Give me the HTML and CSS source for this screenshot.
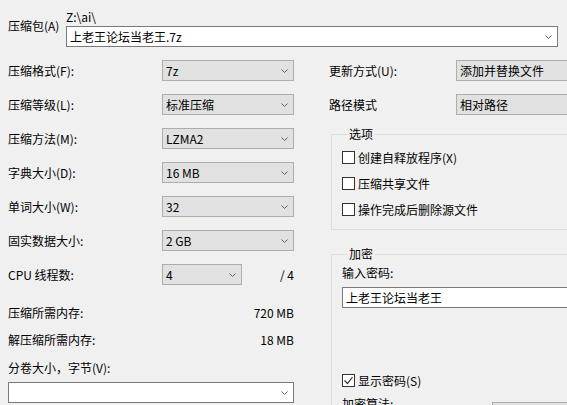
FILE: index.html
```html
<!DOCTYPE html>
<html lang="zh-CN">
<head>
	<meta charset="UTF-8">
	<title>添加到压缩包</title>
	<link rel="stylesheet" href="styles.css">
</head>
<body>

<div id="dialog">

	<div class="archive">
		<span class="archive-label">压缩包(A)</span>
		<div class="archive-field">
			<div class="path">Z:\ai\</div>
			<div class="combo edit">上老王论坛当老王.7z<svg class="arrow" width="7" height="4" viewBox="0 0 7 4"><polyline points="0.5,0.5 3.5,3.5 6.5,0.5"/></svg></div>
		</div>
	</div>

	<div class="columns">

		<div class="col-left">
			<div class="row"><span class="label">压缩格式(F):</span><div class="combo">7z<svg class="arrow" width="7" height="4" viewBox="0 0 7 4"><polyline points="0.5,0.5 3.5,3.5 6.5,0.5"/></svg></div></div>
			<div class="row"><span class="label">压缩等级(L):</span><div class="combo">标准压缩<svg class="arrow" width="7" height="4" viewBox="0 0 7 4"><polyline points="0.5,0.5 3.5,3.5 6.5,0.5"/></svg></div></div>
			<div class="row"><span class="label">压缩方法(M):</span><div class="combo">LZMA2<svg class="arrow" width="7" height="4" viewBox="0 0 7 4"><polyline points="0.5,0.5 3.5,3.5 6.5,0.5"/></svg></div></div>
			<div class="row"><span class="label">字典大小(D):</span><div class="combo">16 MB<svg class="arrow" width="7" height="4" viewBox="0 0 7 4"><polyline points="0.5,0.5 3.5,3.5 6.5,0.5"/></svg></div></div>
			<div class="row"><span class="label">单词大小(W):</span><div class="combo">32<svg class="arrow" width="7" height="4" viewBox="0 0 7 4"><polyline points="0.5,0.5 3.5,3.5 6.5,0.5"/></svg></div></div>
			<div class="row"><span class="label">固实数据大小:</span><div class="combo">2 GB<svg class="arrow" width="7" height="4" viewBox="0 0 7 4"><polyline points="0.5,0.5 3.5,3.5 6.5,0.5"/></svg></div></div>
			<div class="row"><span class="label">CPU 线程数:</span><div class="combo short">4<svg class="arrow" width="7" height="4" viewBox="0 0 7 4"><polyline points="0.5,0.5 3.5,3.5 6.5,0.5"/></svg></div><span class="of">/ 4</span></div>

			<div class="mem first"><span>压缩所需内存:</span><span>720 MB</span></div>
			<div class="mem"><span>解压缩所需内存:</span><span>18 MB</span></div>

			<div class="volume-label">分卷大小，字节(V):</div>
			<div class="combo edit volume"><span></span><svg class="arrow" width="7" height="4" viewBox="0 0 7 4"><polyline points="0.5,0.5 3.5,3.5 6.5,0.5"/></svg></div>
		</div>

		<div class="col-right">
			<div class="row"><span class="label">更新方式(U):</span><div class="combo wide">添加并替换文件</div></div>
			<div class="row"><span class="label">路径模式</span><div class="combo wide">相对路径</div></div>

			<fieldset class="group options">
				<legend>选项</legend>
				<label class="check"><span class="box"></span>创建自释放程序(X)</label>
				<label class="check"><span class="box"></span>压缩共享文件</label>
				<label class="check"><span class="box"></span>操作完成后删除源文件</label>
			</fieldset>

			<fieldset class="group crypt">
				<legend>加密</legend>
				<div class="pw-label">输入密码:</div>
				<div class="edit pw">上老王论坛当老王</div>
				<label class="check show-pw"><span class="box checked"><svg width="11" height="11" viewBox="0 0 11 11"><polyline points="1.5,5.5 4.5,8.5 9.5,2"/></svg></span>显示密码(S)</label>
				<div class="algo"><span class="label">加密算法:</span><div class="combo wide">AES-256</div></div>
			</fieldset>
		</div>

	</div>

</div>

</body>
</html>
```

FILE: styles.css
```css
* {
	box-sizing: border-box;
}
html, body {
	margin: 0;
	background-color: #f0f0f0;
	overflow: hidden;
}
body {
	color: #000;
	font-family: "Noto Sans CJK SC", "Noto Sans", sans-serif;
	font-size: 12px;
	line-height: 14px;
}
#dialog {
	width: 640px;
	height: 405px;
	padding: 10px 0 0 8px;
}

/* archive path */
.archive {
	display: flex;
}
.archive-label {
	width: 58px;
	margin-top: 9px;
}
.archive-field {
	width: 492px;
}
.path {
	margin-bottom: 2px;
}

/* combo boxes and edit fields */
.combo,
.edit {
	height: 21px;
	display: flex;
	align-items: center;
	justify-content: space-between;
	padding: 0 5px 0 3px;
	border: 1px solid #adadad;
	background-color: #e1e1e1;
	white-space: nowrap;
}
.edit {
	border-color: #7a7a7a;
	background-color: #fff;
}
.arrow {
	fill: none;
	stroke: #606060;
	stroke-width: 1;
}

.columns {
	display: flex;
	margin-top: 13px;
	gap: 35px;
}
.col-left {
	width: 286px;
	display: flex;
	flex-direction: column;
}
.col-right {
	width: 290px;
	display: flex;
	flex-direction: column;
}
.row {
	display: flex;
	align-items: center;
	height: 21px;
	margin-bottom: 13px;
}
.col-left .label {
	width: 154px;
}
.col-left .combo {
	width: 132px;
}
.col-left .combo.short {
	width: 80px;
}
.col-left .combo.volume {
	width: 286px;
}
.of {
	margin-left: auto;
}
.mem {
	display: flex;
	justify-content: space-between;
	margin-bottom: 13px;
}
.mem.first {
	margin-top: 8px;
}
.volume-label {
	margin: 1px 0 7px;
}

/* right column */
.col-right .label {
	width: 127px;
}
.col-right .combo.wide {
	width: 140px;
}
.group {
	margin: 0 0 0 2px;
	padding: 4px 10px 13px;
	border: 1px solid #dcdcdc;
	width: 300px;
}
.group legend {
	padding: 0 2px;
	margin-left: 5px;
}
.options {
	margin-top: -1px;
}
.check {
	display: flex;
	align-items: center;
	height: 13px;
	margin: 6px 0 13px;
}
.check + .check {
	margin-top: 0;
}
.options .check:last-child {
	margin-bottom: 0;
}
.box {
	width: 13px;
	height: 13px;
	border: 1px solid #333;
	background-color: #fff;
	margin-right: 3px;
	display: flex;
	align-items: center;
	justify-content: center;
}
.box svg {
	fill: none;
	stroke: #333;
	stroke-width: 1.2;
}
.crypt {
	margin-top: 17px;
	padding-top: 5px;
	height: 200px;
}
.pw-label {
	margin-bottom: 7px;
}
.pw {
	justify-content: flex-start;
}
.show-pw {
	margin: 66px 0 0;
}
.algo {
	display: flex;
	align-items: flex-start;
	margin-top: 10px;
}
.algo .label {
	width: 150px;
}
.algo .combo {
	margin-top: 5px;
}
```
